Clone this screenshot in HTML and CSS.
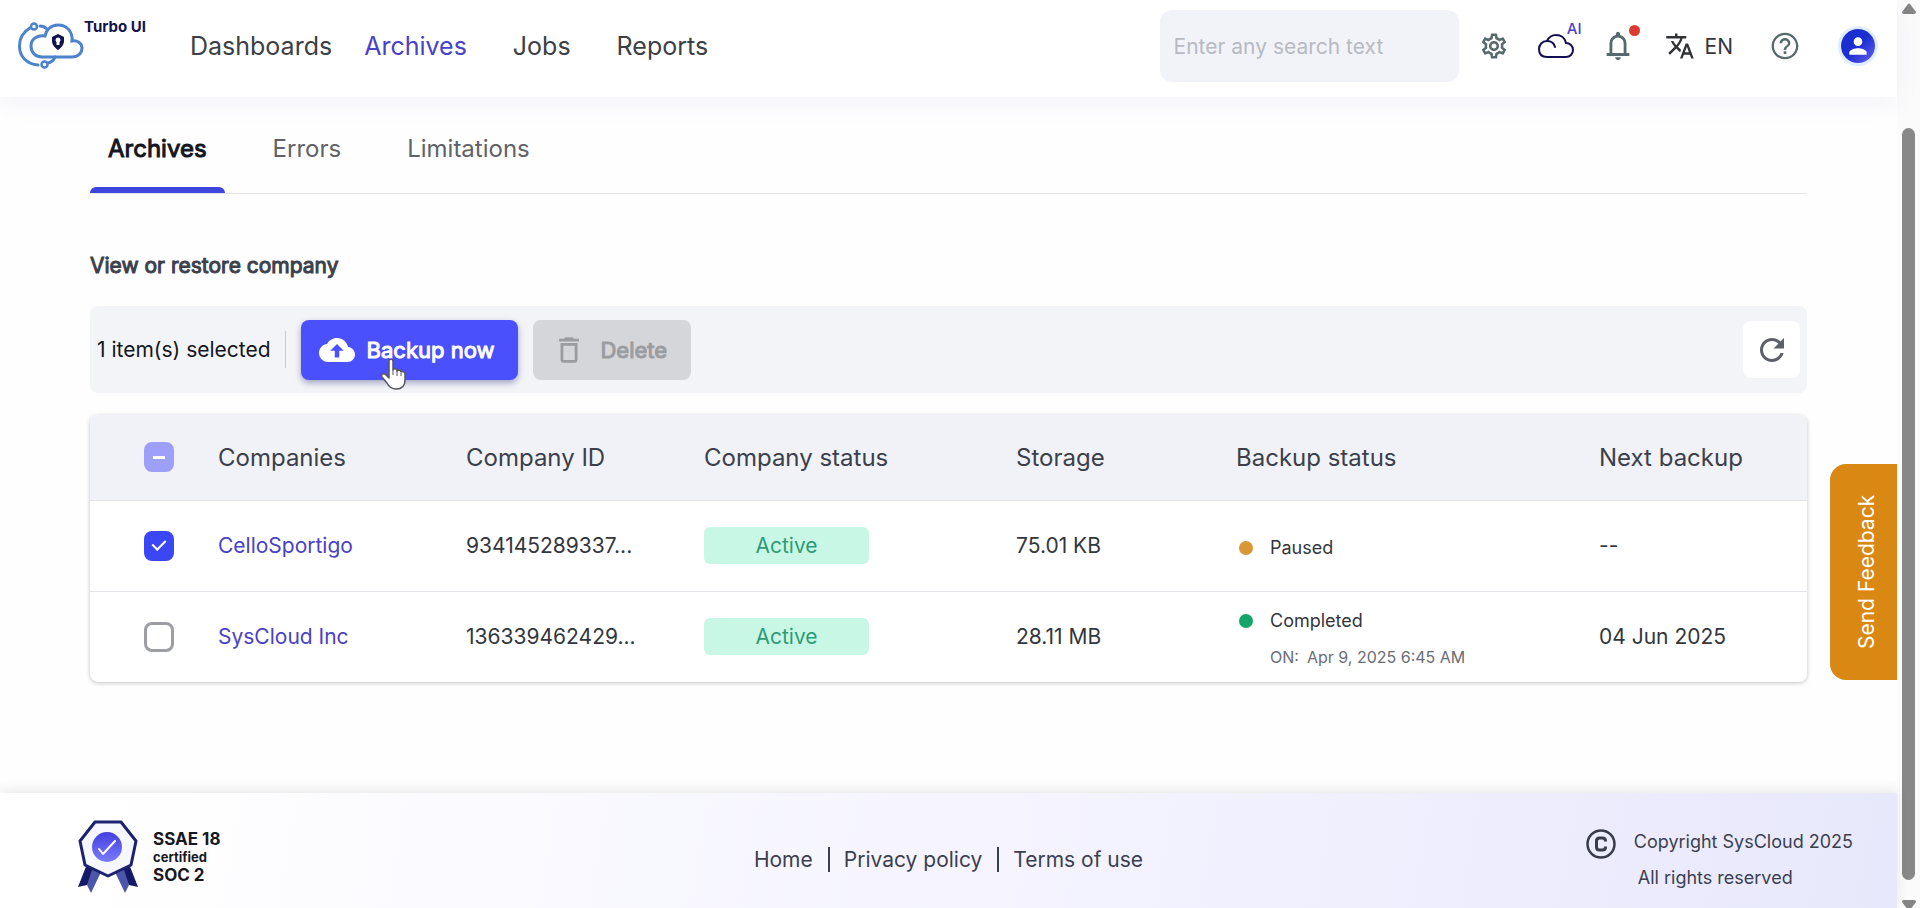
FILE: index.html
```html
<!DOCTYPE html>
<html lang="en">
<head>
    <meta charset="UTF-8">
    <title>Archives</title>
    <link rel="stylesheet" href="styles.css">
</head>
<body>
    <div class="page">
        <header class="topbar">
            <a class="logo" href="#" aria-label="Turbo UI">
                <svg width="66" height="48" viewBox="0 0 66 48" fill="none" stroke="#4d82cc" stroke-width="3" stroke-linecap="round">
                    <path d="M24 35 H54 C60 35 64 31 64 26 C64 21 59 18 54 19 C55 10 49 3 40 3 C33 3 28 8 27 14 C19 13 13 17 13 24 C13 31 18 35 24 35 Z" />
                    <path d="M12 6 C5 10 1.500 16 1.500 24 C1.500 35 9 42 20 43" />
                    <path d="M22 4 C25 4 27 5 29 7" />
                    <path d="M30 41 C34 40 36 38 37 35" />
                    <circle cx="16" cy="4.500" r="3" stroke-width="2.500" />
                    <circle cx="26.500" cy="42.500" r="3" stroke-width="2.500" />
                    <path d="M40 12 L46 15 V19 C46 23 43 26 40 28 C37 26 34 23 34 19 V15 Z" fill="#12124f" stroke="none" />
                    <path d="M40 15.500 a2.500 2.500 0 0 1 1.500 4.500 V23 h-3 V20 a2.500 2.500 0 0 1 1.500 -4.500 Z" fill="#fff" stroke="none" />
                </svg>
                <span>Turbo UI</span>
            </a>
            <nav class="main-nav">
                <a href="#">Dashboards</a>
                <a href="#" class="current">Archives</a>
                <a href="#">Jobs</a>
                <a href="#">Reports</a>
            </nav>
            <div class="tools">
                <input class="search" type="text" placeholder="Enter any search text" aria-label="Search">
                <button class="icon-button settings" aria-label="Settings">
                    <svg width="30" height="30" viewBox="0 0 24 24" fill="#566a6e"><path d="M19.43 12.98c.04-.32.07-.64.07-.98 0-.34-.03-.66-.07-.98l2.11-1.65c.19-.15.24-.42.12-.64l-2-3.46c-.09-.16-.26-.25-.44-.25-.06 0-.12.01-.17.03l-2.49 1c-.52-.4-1.08-.73-1.69-.98l-.38-2.65C14.46 2.18 14.25 2 14 2h-4c-.25 0-.46.18-.49.42l-.38 2.65c-.61.25-1.17.59-1.69.98l-2.49-1c-.06-.02-.12-.03-.18-.03-.17 0-.34.09-.43.25l-2 3.46c-.13.22-.07.49.12.64l2.11 1.65c-.04.32-.07.65-.07.98 0 .33.03.66.07.98l-2.11 1.65c-.19.15-.24.42-.12.64l2 3.46c.09.16.26.25.44.25.06 0 .12-.01.17-.03l2.49-1c.52.4 1.08.73 1.69.98l.38 2.65c.03.24.24.42.49.42h4c.25 0 .46-.18.49-.42l.38-2.65c.61-.25 1.17-.59 1.69-.98l2.49 1c.06.02.12.03.18.03.17 0 .34-.09.43-.25l2-3.46c.12-.22.07-.49-.12-.64l-2.11-1.65zm-1.98-1.71c.04.31.05.52.05.73 0 .21-.02.43-.05.73l-.14 1.13.89.7 1.08.84-.7 1.21-1.27-.51-1.04-.42-.9.68c-.43.32-.84.56-1.25.73l-1.06.43-.16 1.13-.2 1.35h-1.4l-.19-1.35-.16-1.13-1.06-.43c-.43-.18-.83-.41-1.23-.71l-.91-.7-1.06.43-1.27.51-.7-1.21 1.08-.84.89-.7-.14-1.13c-.03-.31-.05-.54-.05-.74s.02-.43.05-.73l.14-1.13-.89-.7-1.08-.84.7-1.21 1.27.51 1.04.42.9-.68c.43-.32.84-.56 1.25-.73l1.06-.43.16-1.13.2-1.35h1.39l.19 1.35.16 1.13 1.06.43c.43.18.83.41 1.23.71l.91.7 1.06-.43 1.27-.51.7 1.21-1.07.85-.89.7.14 1.13zM12 8c-2.21 0-4 1.79-4 4s1.79 4 4 4 4-1.79 4-4-1.79-4-4-4zm0 6c-1.100 0-2-.9-2-2s.9-2 2-2 2 .9 2 2-.9 2-2 2z" /></svg>
                </button>
                <button class="icon-button cloud" aria-label="AI">
                    <svg width="38" height="26" viewBox="0 0 38 26" fill="none" stroke="#14104f" stroke-width="2" stroke-linecap="round">
                        <path d="M10 24 H29 C33 24 36 21 36 17 C36 13 33 10 29 10 C28 5 24 2 19 2 C15 2 12 4 10 8 C5 8 2 12 2 16 C2 21 5 24 10 24 Z" />
                        <path d="M10 8 C14 8 17 10 18 14" />
                    </svg>
                    <span class="ai-tag">AI</span>
                </button>
                <button class="icon-button bell" aria-label="Notifications">
                    <svg width="34" height="34" viewBox="0 0 24 24" fill="#566a6e"><path d="M4 19v-2h2v-7q0-2.075 1.250-3.687T10.500 4.200v-.7q0-.625.438-1.062T12 2t1.063.438T13.500 3.500v.7q2 .5 3.250 2.113T18 10v7h2v2zm8 3q-.825 0-1.412-.587T10 20h4q0 .825-.587 1.413T12 22m-4-5h8v-7q0-1.650-1.175-2.825T12 6T9.175 7.175T8 10z" /></svg>
                    <span class="alert-dot"></span>
                </button>
                <button class="icon-button language" aria-label="Language">
                    <svg width="30" height="30" viewBox="0 0 24 24" fill="#303236"><path d="M12.870 15.070l-2.540-2.510.03-.03c1.740-1.940 2.980-4.170 3.710-6.530H17V4h-7V2H8v2H1v1.990h11.170C11.500 7.920 10.440 9.750 9 11.350 8.070 10.320 7.300 9.190 6.690 8h-2c.73 1.630 1.730 3.170 2.980 4.560l-5.090 5.020L4 19l5-5 3.110 3.110.76-2.040zM18.500 10h-2L12 22h2l1.120-3h4.750L21 22h2l-4.500-12zm-2.620 7l1.620-4.330L19.120 17h-3.240z" /></svg>
                    <span>EN</span>
                </button>
                <button class="icon-button help" aria-label="Help">
                    <svg width="32" height="32" viewBox="0 0 24 24" fill="#566a6e"><path d="M11 18h2v-2h-2v2zm1-16C6.480 2 2 6.480 2 12s4.480 10 10 10 10-4.480 10-10S17.520 2 12 2zm0 18.300c-4.570 0-8.300-3.730-8.300-8.300S7.430 3.700 12 3.700s8.300 3.730 8.300 8.300-3.730 8.300-8.300 8.300zM12 6c-2.210 0-4 1.790-4 4h1.800c0-1.200 1-2.200 2.200-2.200s2.200 1 2.200 2.200c0 2-3.100 1.750-3.100 5h1.800c0-2.250 3.100-2.500 3.100-5 0-2.210-1.790-4-4-4z" /></svg>
                </button>
                <button class="avatar" aria-label="Account">
                    <svg width="26" height="26" viewBox="0 0 24 24" fill="#fff"><path d="M12 12c2.210 0 4-1.790 4-4s-1.790-4-4-4-4 1.790-4 4 1.790 4 4 4zm0 2c-2.670 0-8 1.340-8 4v2h16v-2c0-2.660-5.330-4-8-4z" /></svg>
                </button>
            </div>
        </header>

        <main class="content">
            <nav class="tabs">
                <a href="#" class="active">Archives</a>
                <a href="#">Errors</a>
                <a href="#">Limitations</a>
            </nav>

            <h1>View or restore company</h1>

            <div class="toolbar">
                <span class="selected-count">1 item(s) selected</span>
                <button class="backup">
                    <svg width="36" height="36" viewBox="0 0 24 24" fill="#fff"><path d="M19.350 10.040C18.670 6.590 15.640 4 12 4 9.110 4 6.600 5.640 5.350 8.040 2.340 8.360 0 10.910 0 14c0 3.310 2.690 6 6 6h13c2.760 0 5-2.240 5-5 0-2.640-2.050-4.780-4.650-4.960zM13.500 12.500v4.500h-3v-4.500H7.500l4.500-4.500 4.500 4.500z" /></svg>
                    Backup now
                    <!-- hand pointer -->
                    <svg class="pointer" width="26" height="33" viewBox="0 0 26 33"><path d="M9 3 C9 0.500 13 0.500 13 3 V12 C14 10 17 10.500 17 13 C18 11.500 21 12 21 14 C22 13 25 13.500 25 16 V22 C25 28 22 31 16 31 C11 31 9 29 7 25 L2 19 C0.500 16.500 3.500 14.500 5.500 16.500 L9 20 Z" fill="#fff" stroke="#55565e" stroke-width="1.500" stroke-linejoin="round" /><path d="M13 12 V17 M17 13 V18 M21 15 V18" stroke="#55565e" stroke-width="1" /></svg>
                </button>
                <button class="delete" disabled>
                    <svg width="34" height="34" viewBox="0 0 24 24" fill="#9b9ca0"><path d="M6 19c0 1.100.9 2 2 2h8c1.100 0 2-.9 2-2V7H6v12zM8 9h8v10H8V9zm7.500-5l-1-1h-5l-1 1H5v2h14V4h-3.500z" /></svg>
                    Delete
                </button>
                <button class="refresh" aria-label="Refresh">
                    <svg width="36" height="36" viewBox="0 0 24 24" fill="#5d6066"><path d="M17.650 6.350C16.200 4.900 14.210 4 12 4c-4.420 0-7.990 3.580-7.990 8s3.570 8 7.990 8c3.730 0 6.840-2.550 7.730-6h-2.080c-.82 2.330-3.040 4-5.650 4-3.310 0-6-2.690-6-6s2.690-6 6-6c1.660 0 3.140.69 4.220 1.780L13 11h7V4l-2.350 2.350z" /></svg>
                </button>
            </div>

            <table class="companies">
                <thead>
                    <tr>
                        <th class="col-check"><input type="checkbox" class="partial" aria-label="Select all"></th>
                        <th class="col-name">Companies</th>
                        <th class="col-id">Company ID</th>
                        <th class="col-status">Company status</th>
                        <th class="col-storage">Storage</th>
                        <th class="col-backup">Backup status</th>
                        <th>Next backup</th>
                    </tr>
                </thead>
                <tbody>
                    <tr>
                        <td class="col-check"><input type="checkbox" checked aria-label="Select CelloSportigo"></td>
                        <td><a href="#">CelloSportigo</a></td>
                        <td>934145289337...</td>
                        <td><span class="badge">Active</span></td>
                        <td>75.01 KB</td>
                        <td class="backup-cell"><div class="state paused">Paused</div></td>
                        <td>--</td>
                    </tr>
                    <tr>
                        <td class="col-check"><input type="checkbox" aria-label="Select SysCloud Inc"></td>
                        <td><a href="#">SysCloud Inc</a></td>
                        <td>136339462429...</td>
                        <td><span class="badge">Active</span></td>
                        <td>28.11 MB</td>
                        <td class="backup-cell">
                            <div class="state completed">Completed</div>
                            <div class="state-date"><span>ON:</span><span>Apr 9, 2025 6:45 AM</span></div>
                        </td>
                        <td>04 Jun 2025</td>
                    </tr>
                </tbody>
            </table>
        </main>

        <footer class="footer">
            <div class="certificate">
                <svg width="60" height="74" viewBox="0 0 60 74">
                    <defs>
                        <linearGradient id="seal" x1="0" y1="0" x2="0" y2="1">
                            <stop offset="0" stop-color="#4340dc" />
                            <stop offset="1" stop-color="#7b7bff" />
                        </linearGradient>
                    </defs>
                    <path d="M9 44 L0 67 L9 65 L18 50 Z M51 44 L60 67 L51 65 L42 50 Z" fill="#141a68" />
                    <path d="M15 47 L9 65 L13 73 L23 52 Z M45 47 L51 65 L47 73 L37 52 Z" fill="#4c56a8" />
                    <path d="M17 2 H43 L58 21 L53 45 L30 56 L7 45 L2 21 Z" fill="#f7f8ff" stroke="#1d2270" stroke-width="3" stroke-linejoin="round" />
                    <circle cx="29" cy="27" r="15" fill="url(#seal)" />
                    <path d="M21 29 L25 34 L37 21" fill="none" stroke="#fff" stroke-width="2" stroke-linecap="round" stroke-linejoin="round" />
                </svg>
                <p>SSAE 18<small>certified</small>SOC 2</p>
            </div>
            <nav class="footer-links">
                <a href="#">Home</a>
                <a href="#">Privacy policy</a>
                <a href="#">Terms of use</a>
            </nav>
            <div class="copyright">
                <svg width="30" height="30" viewBox="0 0 30 30" fill="none" stroke="#383b4a" stroke-width="3">
                    <circle cx="15" cy="15" r="13.500" stroke-width="2.500" />
                    <path d="M19.500 12.500 V12 C19.500 10 18.500 9 16.500 9 H13.500 C11.500 9 10.500 10 10.500 12 V18 C10.500 20 11.500 21 13.500 21 H16.500 C18.500 21 19.500 20 19.500 18 V17.500" />
                </svg>
                <p>Copyright SysCloud 2025<br><span>All rights reserved</span></p>
            </div>
        </footer>

        <button class="feedback">Send Feedback</button>
    </div>

    <div class="scrollbar">
        <svg width="14" height="12" viewBox="0 0 14 12" fill="#858585"><path d="M6 1 Q7 0 8 1 L14 9 Q14 11 12 11 H2 Q0 11 0 9 Z" /></svg>
        <div class="thumb"></div>
        <svg width="14" height="9" viewBox="0 0 14 9" fill="#858585"><path d="M6 11 Q7 12 8 11 L14 3 Q14 1 12 1 H2 Q0 1 0 3 Z" /></svg>
    </div>
</body>
</html>
```

FILE: styles.css
```css
* {
    box-sizing: border-box;
}

body {
    margin: 0;
    height: 100vh;
    display: flex;
    overflow: hidden;
    font-family: Inter, "Liberation Sans", sans-serif;
    font-size: 21px;
    color: #33363d;
    background-color: #fefefe;
}

a {
    color: inherit;
    text-decoration: none;
}

button {
    font: inherit;
    color: inherit;
    border: none;
    padding: 0;
    background: none;
    cursor: pointer;
}

svg {
    flex: none;
    display: block;
}

.page {
    position: relative;
    flex: 1;
    min-width: 0;
    display: flex;
    flex-direction: column;
}

/* top bar */

.topbar {
    display: flex;
    align-items: center;
    height: 97px;
    padding: 0 22px 5px 18px;
    background-color: #fff;
    box-shadow: 0 6px 24px rgba(60, 60, 180, 0.06);
}

.logo {
    display: flex;
    align-items: flex-start;
    width: 172px;
    color: #12124f;
    font-size: 15px;
    font-weight: 700;
    line-height: 10px;
}

.main-nav {
    display: flex;
    font-size: 25px;
    color: #3c4045;
}

.main-nav a {
    margin-right: 32px;
}

.main-nav .current {
    color: #4a41c6;
    margin-right: 46px;
}

.main-nav .current + a {
    margin-right: 46px;
}

.tools {
    display: flex;
    align-items: center;
    margin-left: auto;
}

.search {
    width: 299px;
    height: 72px;
    margin-right: 20px;
    padding: 0 14px;
    border: none;
    border-radius: 12px;
    font: inherit;
    background-color: #f2f3f9;
}

.search::placeholder {
    color: #b7bac2;
    opacity: 1;
}

.icon-button {
    position: relative;
    display: flex;
    align-items: center;
}

.cloud {
    margin-left: 28px;
}

.ai-tag {
    position: absolute;
    top: -14px;
    right: -7px;
    font-size: 15px;
    font-weight: 500;
    color: #4a41c6;
}

.bell {
    margin-left: 26px;
}

.alert-dot {
    position: absolute;
    top: -4px;
    right: -5px;
    width: 11px;
    height: 11px;
    border-radius: 50%;
    background-color: #dc3b33;
}

.language {
    gap: 10px;
    margin-left: 30px;
}

.help {
    margin-left: 36px;
}

.avatar {
    display: flex;
    align-items: center;
    justify-content: center;
    width: 34px;
    height: 34px;
    margin-left: 40px;
    border-radius: 50%;
    background: linear-gradient(135deg, #1b2fd0 50%, #6a62f0);
    box-shadow: 0 0 0 3px #deedff;
}

/* content */

.content {
    flex: 1;
    padding: 0 90px;
}

.tabs {
    display: flex;
    gap: 30px;
    height: 97px;
    border-bottom: 1px solid #e6e6ea;
    font-size: 24px;
    color: #606267;
}

.tabs a {
    display: flex;
    flex-direction: column;
    justify-content: space-between;
    padding: 37px 18px 0;
}

.tabs .active {
    color: #14161f;
    -webkit-text-stroke: 1px;
}

.tabs .active::after {
    content: "";
    height: 6px;
    margin: 0 -18px;
    border-radius: 6px 6px 0 0;
    background-color: #3c45dc;
}

h1 {
    margin: 59px 0 27px;
    font-size: 21px;
    font-weight: 400;
    line-height: 26px;
    color: #3c404b;
    -webkit-text-stroke: 1px;
}

.toolbar {
    display: flex;
    align-items: center;
    gap: 15px;
    height: 87px;
    margin-bottom: 22px;
    padding: 0 7px;
    border-radius: 8px;
    background-color: #f3f4f8;
}

.selected-count {
    padding-right: 14px;
    line-height: 37px;
    border-right: 1px solid #c9cad0;
    color: #14161c;
}

.backup,
.delete {
    position: relative;
    display: flex;
    align-items: center;
    height: 60px;
    border-radius: 8px;
    font-size: 22px;
    -webkit-text-stroke: 1px;
}

.backup {
    gap: 12px;
    padding: 0 24px 0 18px;
    color: #fff;
    background-color: #4a50fb;
    box-shadow: 0 3px 6px rgba(40, 45, 120, 0.4);
}

.delete {
    gap: 14px;
    padding: 0 24px 0 19px;
    color: #9b9ca0;
    background-color: #d5d6da;
}

.pointer {
    position: absolute;
    top: 38px;
    left: 79px;
}

.refresh {
    display: flex;
    align-items: center;
    justify-content: center;
    width: 57px;
    height: 57px;
    margin-left: auto;
    border-radius: 8px;
    background-color: #fff;
}

/* companies table */

.companies {
    width: 100%;
    table-layout: fixed;
    border-collapse: collapse;
    border-radius: 8px;
    overflow: hidden;
    background-color: #fff;
    box-shadow: 0 1px 4px rgba(0, 0, 0, 0.24);
}

.companies th,
.companies td {
    padding: 0;
    text-align: left;
    white-space: nowrap;
}

.companies th {
    height: 85px;
    font-size: 24px;
    font-weight: 400;
    color: #3c404b;
    background-color: #f1f2f7;
}

.companies td {
    height: 91px;
    border-top: 1px solid #e3e4e8;
}

.companies td a {
    color: #4a41c6;
}

.companies .col-check {
    width: 128px;
    padding-left: 54px;
}

.col-name {
    width: 248px;
}

.col-id {
    width: 238px;
}

.col-status {
    width: 312px;
}

.col-storage {
    width: 220px;
}

.col-backup {
    width: 363px;
}

input[type="checkbox"] {
    appearance: none;
    display: flex;
    align-items: center;
    justify-content: center;
    width: 30px;
    height: 30px;
    margin: 0;
    border: 3px solid #9c9ea3;
    border-radius: 8px;
}

input[type="checkbox"]:checked {
    border-color: #3b46f5;
    background-color: #3b46f5;
}

input[type="checkbox"]:checked::before {
    content: "";
    width: 6px;
    height: 11px;
    margin-bottom: 4px;
    border: solid #fff;
    border-width: 0 2px 2px 0;
    transform: rotate(45deg);
}

input[type="checkbox"].partial {
    border-color: #9d9ff8;
    background-color: #9d9ff8;
}

.partial::before {
    content: "";
    width: 12px;
    height: 3px;
    background-color: #fff;
}

.badge {
    display: block;
    width: 165px;
    border-radius: 6px;
    line-height: 37px;
    text-align: center;
    color: #2f9b76;
    background-color: #c8f8e5;
}

.companies .backup-cell {
    padding-top: 5px;
}

.state {
    display: flex;
    align-items: center;
    gap: 17px;
    padding-left: 3px;
    font-size: 18px;
    line-height: 36px;
}

.state::before {
    content: "";
    width: 14px;
    height: 14px;
    border-radius: 50%;
}

.paused::before {
    background-color: #db9636;
}

.completed::before {
    background-color: #14a56b;
}

.state-date {
    display: flex;
    gap: 8px;
    padding-left: 34px;
    font-size: 16px;
    line-height: 36px;
    color: #6a6d75;
}

/* feedback tab */

.feedback {
    position: absolute;
    top: 464px;
    right: 0;
    width: 67px;
    height: 216px;
    padding-right: 6px;
    border-radius: 0 16px 16px 0;
    writing-mode: vertical-rl;
    transform: rotate(180deg);
    text-align: center;
    color: #fff;
    background-color: #da8814;
}

/* footer */

.footer {
    display: grid;
    grid-template-columns: 1fr auto 1fr;
    align-items: center;
    height: 115px;
    padding: 0 44px;
    color: #3c3f50;
    background: linear-gradient(100deg, #fff 5%, #f4f3ff 55%, #e8e8fc);
    box-shadow: 0 -3px 12px rgba(0, 0, 0, 0.09);
}

.certificate {
    display: flex;
    align-items: center;
    gap: 15px;
    padding: 12px 0 0 34px;
}

.certificate p {
    margin: 0;
    font-size: 17px;
    font-weight: 700;
    line-height: 18px;
    color: #17181f;
}

.certificate small {
    display: block;
    font-size: 13px;
}

.footer-links {
    display: flex;
    padding-top: 18px;
}

.footer-links a + a {
    margin-left: 15px;
    padding-left: 14px;
    border-left: 2px solid #3c3f50;
}

.copyright {
    display: flex;
    justify-content: flex-end;
    gap: 18px;
    padding-top: 18px;
    font-size: 18px;
}

.copyright svg {
    margin-top: 5px;
}

.copyright p {
    margin: 0;
    line-height: 36px;
}

.copyright span {
    padding-left: 4px;
}

/* scroll bar */

.scrollbar {
    display: flex;
    flex-direction: column;
    align-items: center;
    width: 23px;
    padding: 3px 0 0;
    background-color: #fbfbfb;
}

.thumb {
    width: 13px;
    margin: 113px 0 19px;
    flex: 1;
    border-radius: 7px;
    background-color: #888;
}
```
